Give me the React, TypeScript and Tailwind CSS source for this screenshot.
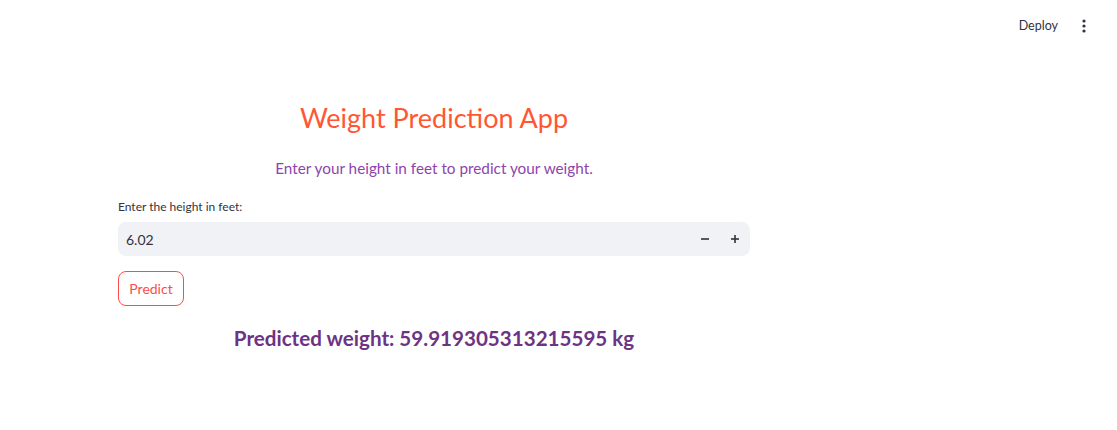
import { useState } from "react";

// Streamlit-style weight prediction page
export default function App() {
  const [height, setHeight] = useState(6.02);

  return (
    <div className="relative min-h-[430px] w-full bg-white font-['Lato','Noto_Sans',sans-serif] text-[#31333f]">
      {/* 상단 툴바 */}
      <div className="flex h-[52px] items-center justify-end gap-[14px] pr-[21px]">
        <button type="button" className="text-[12.5px] font-normal text-[#31333f]">
          Deploy
        </button>
        <button type="button" aria-label="menu" className="flex size-[24px] items-center justify-center">
          <svg width={4} height={14} viewBox="0 0 4 14" aria-hidden="true">
            <circle cx={2} cy={2} r={1.6} fill="#31333f" />
            <circle cx={2} cy={7} r={1.6} fill="#31333f" />
            <circle cx={2} cy={12} r={1.6} fill="#31333f" />
          </svg>
        </button>
      </div>

      <div className="ml-[118px] flex w-[632px] flex-col">
        <h1 className="mt-[48px] text-center text-[27px] leading-[36px] font-normal text-[#ff5733]">
          Weight Prediction App
        </h1>
        <p className="mt-[20px] text-center text-[15.3px] leading-[24px] text-[#8e44ad]">
          Enter your height in feet to predict your weight.
        </p>

        <label className="mt-[17px] text-[12px] leading-[20px] text-[#31333f]">
          Enter the height in feet:
        </label>
        <div className="mt-[5px] flex h-[34px] items-center rounded-[8px] bg-[#f0f2f6]">
          <input
            value={height.toFixed(2)}
            onChange={(e) => setHeight(Number(e.target.value))}
            className="flex-1 bg-transparent pl-[8px] text-[14px] text-[#31333f] outline-none"
          />
          <button
            type="button"
            onClick={() => setHeight((h) => h - 0.01)}
            className="flex h-full w-[30px] items-center justify-center text-[#31333f]"
          >
            <svg width={8} height={8} viewBox="0 0 8 8" aria-hidden="true">
              <rect x={0} y={3.2} width={8} height={1.6} fill="currentColor" />
            </svg>
          </button>
          <button
            type="button"
            onClick={() => setHeight((h) => h + 0.01)}
            className="flex h-full w-[30px] items-center justify-center text-[#31333f]"
          >
            <svg width={8} height={8} viewBox="0 0 8 8" aria-hidden="true">
              <rect x={0} y={3.2} width={8} height={1.6} fill="currentColor" />
              <rect x={3.2} y={0} width={1.6} height={8} fill="currentColor" />
            </svg>
          </button>
        </div>

        <button
          type="button"
          className="mt-[15px] h-[35px] w-[66px] rounded-[8px] border border-[#ff4b4b] text-[14px] text-[#ff4b4b]"
        >
          Predict
        </button>

        <h3 className="mt-[16px] text-center text-[20.6px] leading-[32px] font-bold text-[#6c3483]">
          Predicted weight: 59.919305313215595 kg
        </h3>
      </div>
    </div>
  );
}
